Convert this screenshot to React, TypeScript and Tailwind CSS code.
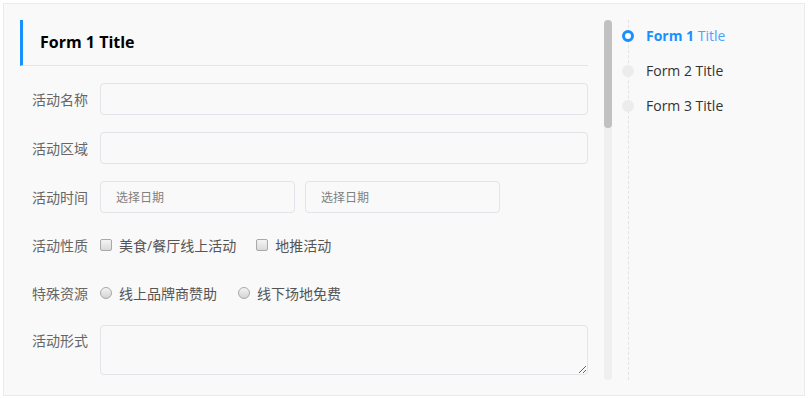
import React from 'react';

const font = { fontFamily: '"Microsoft YaHei", "Open Sans", "Noto Sans CJK SC", sans-serif' };

function Label({ text, top }: { text: string; top?: boolean }) {
  return (
    <div
      className={`w-[80px] shrink-0 pr-3 text-right text-[14px] text-[#666] ${top ? 'leading-[32px] self-start' : ''}`}
    >
      {text}
    </div>
  );
}

function Checkbox({ text }: { text: string }) {
  return (
    <label className="flex items-center gap-[7px] mr-[20px] text-[14px] text-[#555]">
      <span className="w-[12px] h-[12px] rounded-[2px] border border-[#a9a9a9] bg-gradient-to-b from-[#f4f4f4] to-[#d9d9d9]" />
      {text}
    </label>
  );
}

function Radio({ text }: { text: string }) {
  return (
    <label className="flex items-center gap-[7px] mr-[21px] text-[14px] text-[#555]">
      <span className="w-[12px] h-[12px] rounded-full border border-[#a9a9a9] bg-gradient-to-b from-[#f4f4f4] to-[#d3d3d3]" />
      {text}
    </label>
  );
}

const inputCls = 'h-[32px] rounded-[4px] border border-[#e3e3ea] bg-[#f9f9f9] outline-none';

export default function App() {
  return (
    <div className="bg-white w-[808px] h-[398px] p-[3px]" style={font}>
      <div className="w-[802px] h-[393px] border border-[#ebebeb] bg-[#f9f9f9] flex pt-4 pl-4">
        {/* form */}
        <div className="w-[568px] shrink-0">
          <div className="h-[46px] border-l-[3px] border-[#1890ff] border-b border-b-[#e6e6ea] flex items-center pl-[17px] pb-[2px]">
            <span className="text-[16px] font-bold text-black">Form 1 Title</span>
          </div>
          <div className="flex flex-col gap-[17px] mt-[17px]">
            <div className="flex items-center">
              <Label text="活动名称" />
              <input className={`${inputCls} flex-1`} />
            </div>
            <div className="flex items-center">
              <Label text="活动区域" />
              <input className={`${inputCls} flex-1`} />
            </div>
            <div className="flex items-center">
              <Label text="活动时间" />
              <input className={`${inputCls} w-[195px] px-[15px] text-[12px] placeholder:text-[#808080]`} placeholder="选择日期" />
              <input className={`${inputCls} w-[195px] ml-[10px] px-[15px] text-[12px] placeholder:text-[#808080]`} placeholder="选择日期" />
            </div>
            <div className="flex items-center h-[32px] -mt-[1px]">
              <Label text="活动性质" />
              <Checkbox text="美食/餐厅线上活动" />
              <Checkbox text="地推活动" />
            </div>
            <div className="flex items-center h-[32px] -mt-[1px]">
              <Label text="特殊资源" />
              <Radio text="线上品牌商赞助" />
              <Radio text="线下场地免费" />
            </div>
            <div className="flex -mt-[1px]">
              <Label text="活动形式" top />
              <textarea className="flex-1 h-[50px] rounded-[4px] border border-[#e3e3ea] bg-[#f9f9f9] outline-none" />
            </div>
          </div>
        </div>

        {/* scrollbar */}
        <div className="ml-4 w-[8px] h-[360px] rounded-full bg-[#efefef] shrink-0">
          <div className="h-[108px] rounded-full bg-[#c1c1c1]" />
        </div>

        {/* anchor */}
        <div className="relative ml-[10px] h-[360px] w-[170px]">
          <div className="absolute left-[6px] top-0 h-[360px] border-l border-dashed border-[#e3e3e3]" />
          <div className="flex flex-col pt-[5px] gap-[14px]">
            <div className="flex items-center h-[21px]">
              <span className="relative z-10 w-[12px] h-[12px] rounded-full border-[3px] border-[#1890ff] bg-white" />
              <span className="ml-[12px] text-[14px]">
                <span className="font-bold text-[#1890ff]">Form 1</span>{' '}
                <span className="text-[#4aa5ff]">Title</span>
              </span>
            </div>
            <div className="flex items-center h-[21px]">
              <span className="relative z-10 w-[12px] h-[12px] rounded-full bg-[#ececec]" />
              <span className="ml-[12px] text-[14px] text-[#333]">Form 2 Title</span>
            </div>
            <div className="flex items-center h-[21px]">
              <span className="relative z-10 w-[12px] h-[12px] rounded-full bg-[#ececec]" />
              <span className="ml-[12px] text-[14px] text-[#333]">Form 3 Title</span>
            </div>
          </div>
        </div>
      </div>
    </div>
  );
}
